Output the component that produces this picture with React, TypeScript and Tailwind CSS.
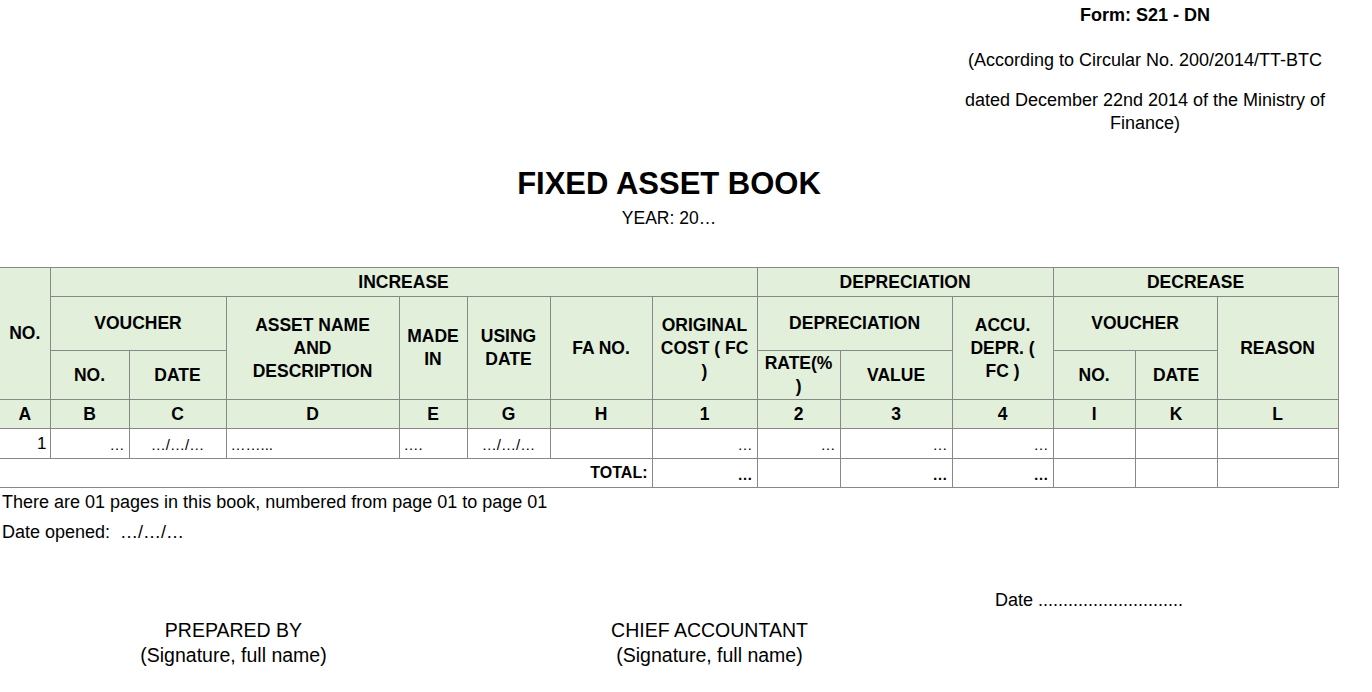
import React from "react";

const cols = [50, 79, 97, 173, 68, 83, 102, 105, 83, 112, 101, 82, 82, 121];

const H = "border border-[#888] bg-[#e2efda] text-center align-middle font-bold text-[17.5px] leading-[23px] px-[2px]";
const D = "border border-[#888] text-[15px] leading-[18px] px-[4px]";

export default function App() {
  return (
    <div className="w-[1372px] h-[692px] bg-white text-black font-['Liberation_Sans',Arial,sans-serif] overflow-hidden">
      <div className="w-[1338px]">
        <div className="flex justify-end">
          <div className="w-[386px] text-center text-[18px] leading-[23px]">
            <p className="pt-[4px] font-bold">Form: S21 - DN</p>
            <p className="mt-[22px]">(According to Circular No. 200/2014/TT-BTC</p>
            <p className="mt-[17px]">dated December 22nd 2014 of the Ministry of Finance)</p>
          </div>
        </div>
        <div className="text-center">
          <h1 className="mt-[31px] font-bold text-[31px] leading-[36px]">FIXED ASSET BOOK</h1>
          <p className="mt-[5px] text-[17.5px] leading-[22px]">YEAR: 20…</p>
        </div>
        <table className="mt-[38px] w-[1338px] table-fixed border-collapse">
          <colgroup>
            {cols.map((w, i) => (
              <col key={i} style={{ width: w }} />
            ))}
          </colgroup>
          <tbody>
            <tr className="h-[29px]">
              <td rowSpan={3} className={H + " border-l-0"}>NO.</td>
              <td colSpan={7} className={H}>INCREASE</td>
              <td colSpan={3} className={H}>DEPRECIATION</td>
              <td colSpan={3} className={H}>DECREASE</td>
            </tr>
            <tr className="h-[54px]">
              <td colSpan={2} className={H}>VOUCHER</td>
              <td rowSpan={2} className={H}>ASSET NAME<br />AND<br />DESCRIPTION</td>
              <td rowSpan={2} className={H}>MADE<br />IN</td>
              <td rowSpan={2} className={H}>USING<br />DATE</td>
              <td rowSpan={2} className={H}>FA NO.</td>
              <td rowSpan={2} className={H}>ORIGINAL<br />COST ( FC<br />)</td>
              <td colSpan={2} className={H}>DEPRECIATION</td>
              <td rowSpan={2} className={H}>ACCU.<br />DEPR. (<br />FC )</td>
              <td colSpan={2} className={H}>VOUCHER</td>
              <td rowSpan={2} className={H}>REASON</td>
            </tr>
            <tr className="h-[49px]">
              <td className={H}>NO.</td>
              <td className={H}>DATE</td>
              <td className={H}>RATE(%<br />)</td>
              <td className={H}>VALUE</td>
              <td className={H}>NO.</td>
              <td className={H}>DATE</td>
            </tr>
            <tr className="h-[29px]">
              {["A", "B", "C", "D", "E", "G", "H", "1", "2", "3", "4", "I", "K", "L"].map((l, i) => (
                <td key={l} className={H + (i === 0 ? " border-l-0" : "")}>{l}</td>
              ))}
            </tr>
            <tr className="h-[30px]">
              <td className="border border-[#888] border-l-0 px-[3px] text-right align-middle text-[17px] leading-[20px]">1</td>
              <td className={D + " text-right align-bottom pb-[4px]"}>…</td>
              <td className={D + " text-center align-bottom pb-[4px]"}>…/…/…</td>
              <td className={D + " text-left align-bottom pb-[4px]"}>……...</td>
              <td className={D + " text-left align-bottom pb-[4px]"}>….</td>
              <td className={D + " text-center align-bottom pb-[4px]"}>…/…/…</td>
              <td className={D}></td>
              <td className={D + " text-right align-bottom pb-[4px]"}>…</td>
              <td className={D + " text-right align-bottom pb-[4px]"}>…</td>
              <td className={D + " text-right align-bottom pb-[4px]"}>…</td>
              <td className={D + " text-right align-bottom pb-[4px]"}>…</td>
              <td className={D}></td>
              <td className={D}></td>
              <td className={D}></td>
            </tr>
            <tr className="h-[29px]">
              <td colSpan={7} className={D + " border-l-0 text-right align-middle font-bold text-[16px]"}>TOTAL:</td>
              <td className={D + " text-right align-bottom font-bold pb-[3px]"}>…</td>
              <td className={D}></td>
              <td className={D + " text-right align-bottom font-bold pb-[3px]"}>…</td>
              <td className={D + " text-right align-bottom font-bold pb-[3px]"}>…</td>
              <td className={D}></td>
              <td className={D}></td>
              <td className={D}></td>
            </tr>
          </tbody>
        </table>
        <div className="pl-[2px] text-[18px] leading-[22px]">
          <p className="mt-[3px]">There are 01 pages in this book, numbered from page 01 to page 01</p>
          <p className="mt-[8px]">Date opened:&nbsp; …/…/…</p>
        </div>
        <div className="flex">
          <div className="w-[952px]"></div>
          <div className="w-[274px] text-center text-[18px] leading-[22px] mt-[46px]">
            Date .............................
          </div>
        </div>
        <div className="flex text-center text-[19.5px] leading-[25px] mt-[7px]">
          <div className="w-[467px]">
            <p>PREPARED BY</p>
            <p>(Signature, full name)</p>
          </div>
          <div className="w-[485px]">
            <p>CHIEF ACCOUNTANT</p>
            <p>(Signature, full name)</p>
          </div>
        </div>
      </div>
    </div>
  );
}
